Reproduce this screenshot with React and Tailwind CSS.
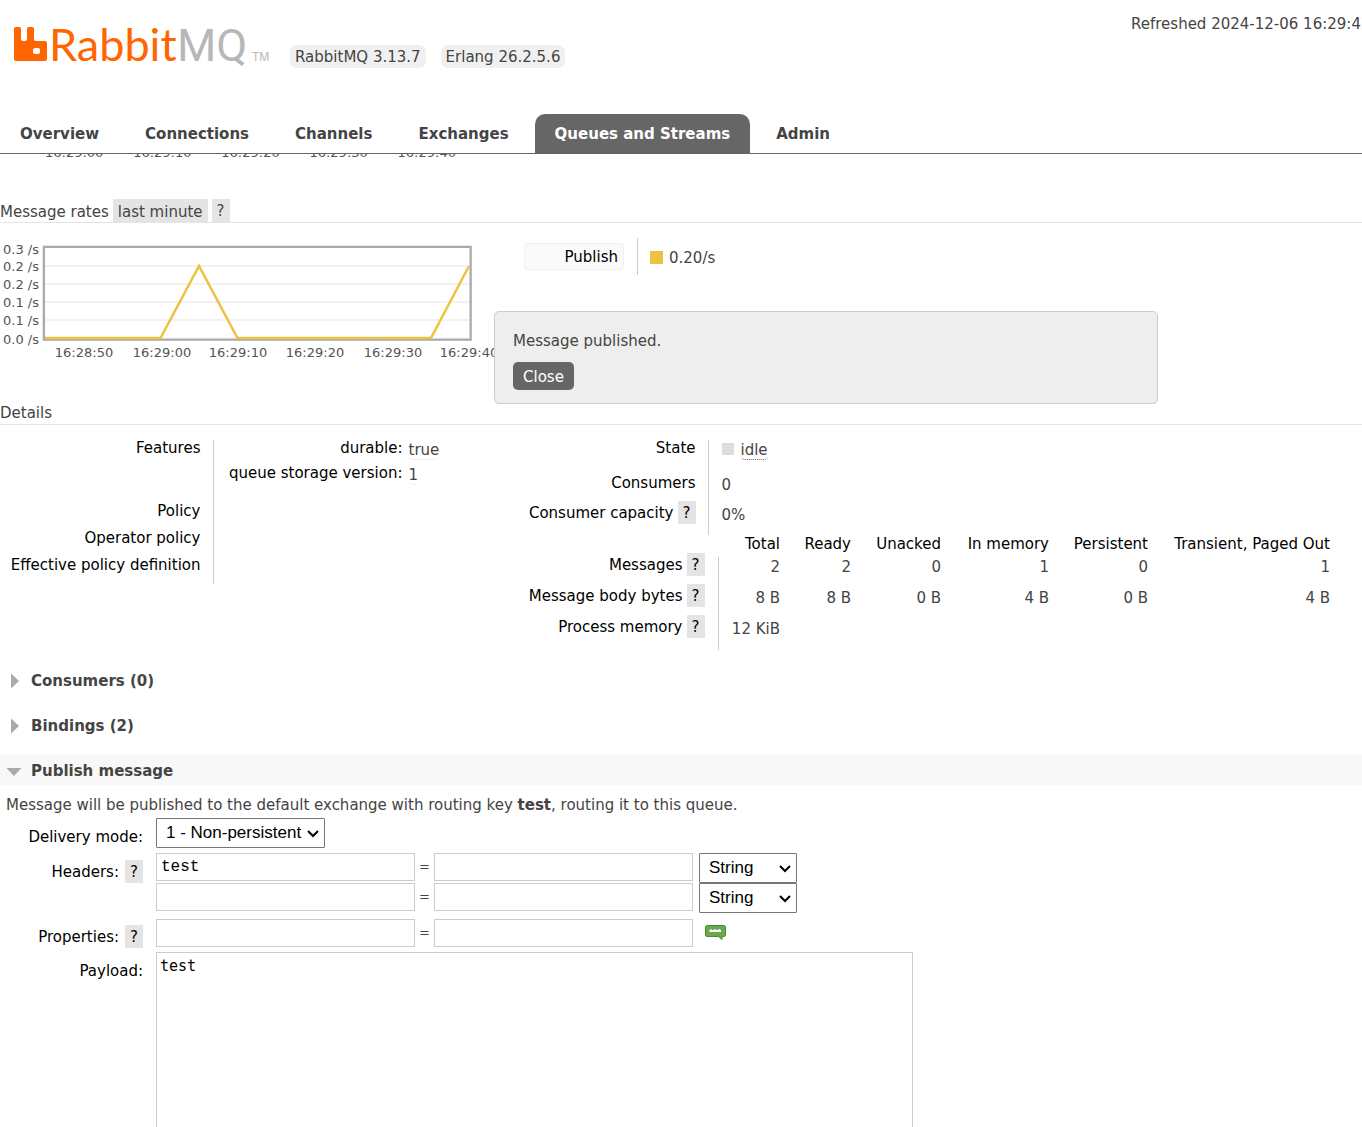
import React from "react";

const HelpButton = () => (
  <button type="button" aria-label="Help" className="h-[23px] w-[18px] bg-[#e4e4e4] text-center leading-[25px]">
    ?
  </button>
);

const Logo = () => (
  <a href="#/" className="block w-[260px]">
    <svg width="260" height="60" viewBox="0 0 260 60" role="img" aria-label="RabbitMQ">
      <path
        fill="#ff6600"
        fillRule="evenodd"
        d="M2 6h3a2 2 0 0 1 2 2v10a2 2 0 0 0 2 2h2a2 2 0 0 0 2-2V8a2 2 0 0 1 2-2h3a2 2 0 0 1 2 2v10a2 2 0 0 0 2 2h9a2 2 0 0 1 2 2v16a2 2 0 0 1-2 2H2a2 2 0 0 1-2-2V8a2 2 0 0 1 2-2zM21 27a2 2 0 0 0-2 2v2a2 2 0 0 0 2 2h3a2 2 0 0 0 2-2v-2a2 2 0 0 0-2-2z"
      />
      <text x="35" y="40" fontFamily="Lato, sans-serif" fontSize="45" fill="#ff6600">
        Rabbit
      </text>
      <text x="163" y="40" fontFamily="Roboto, sans-serif" fontSize="45" fill="#b7b7b7">
        MQ
      </text>
      <text x="238" y="40" fontFamily="Liberation Sans, sans-serif" fontSize="12" fill="#b7b7b7">
        TM
      </text>
    </svg>
  </a>
);

const TABS = ["Overview", "Connections", "Channels", "Exchanges", "Queues and Streams", "Admin"];

const Tab = ({ label }) => {
  const active = label === "Queues and Streams";
  return (
    <a
      href="#/"
      className={
        active
          ? "h-10 rounded-t-[10px] bg-[#666] px-5 leading-[41px] text-white"
          : "h-10 px-5 leading-[41px]"
      }
    >
      {label}
    </a>
  );
};

const Y_LABELS = [
  ["0.3 /s", 14],
  ["0.2 /s", 31],
  ["0.2 /s", 49],
  ["0.1 /s", 67],
  ["0.1 /s", 85],
  ["0.0 /s", 104],
];
const X_LABELS = [
  ["16:28:50", 84],
  ["16:29:00", 162],
  ["16:29:10", 238],
  ["16:29:20", 315],
  ["16:29:30", 393],
  ["16:29:40", 469],
];

const RatesChart = () => (
  <svg width="524" height="125" viewBox="0 0 524 125" className="shrink-0" role="img" aria-label="Message rates">
    <path d="M45 26H470M45 44H470M45 62H470M45 80H470" stroke="#eeeeee" strokeWidth="1.500" />
    <rect x="43" y="6" width="428.500" height="94.500" fill="none" stroke="#cfcfcf" strokeWidth="1" />
    <rect x="44" y="7" width="426.500" height="92.500" fill="none" stroke="#a9a9a9" strokeWidth="2" />
    <path d="M45 98H160.500L199 26L237.500 98H431L469 26" fill="none" stroke="#edc240" strokeWidth="2.500" />
    <g fontFamily="DejaVu Sans, sans-serif" fontSize="13" fill="#545454">
      {Y_LABELS.map(([label, y]) => (
        <text key={y} x="39" y={y} textAnchor="end">
          {label}
        </text>
      ))}
      {X_LABELS.map(([label, x]) => (
        <text key={x} x={x} y="117" textAnchor="middle">
          {label}
        </text>
      ))}
    </g>
  </svg>
);

const Abbr = ({ strong, children }) => (
  <span className={strong ? "rounded border-b border-dotted border-[#666]" : "rounded border-b border-dotted border-[#ddd]"}>
    {children}
  </span>
);

const FeaturesTable = () => (
  <table className="w-[480px] border-collapse">
    <tbody className="align-top">
      <tr className="h-[63px]">
        <th scope="row" className="w-[213px] pr-3 text-right font-normal leading-4 text-black">Features</th>
        <td className="border-l border-[#ccc] pl-[15px]">
          <table>
            <tbody className="align-top">
              <tr className="h-[25px]">
                <th scope="row" className="w-[174px] text-right font-normal leading-4 text-black">durable:</th>
                <td className="pl-[6px] leading-5"><Abbr>true</Abbr></td>
              </tr>
              <tr className="h-[25px]">
                <th scope="row" className="text-right font-normal leading-4 text-black">queue storage version:</th>
                <td className="pl-[6px] leading-5"><Abbr>1</Abbr></td>
              </tr>
            </tbody>
          </table>
        </td>
      </tr>
      {["Policy", "Operator policy", "Effective policy definition"].map((name) => (
        <tr key={name} className="h-[27px]">
          <th scope="row" className="pr-3 text-right font-normal leading-4 text-black">{name}</th>
          <td className="border-l border-[#ccc]" />
        </tr>
      ))}
    </tbody>
  </table>
);

const StateTable = () => (
  <table className="border-collapse">
    <tbody className="align-top">
      <tr className="h-[35px]">
        <th scope="row" className="w-[183px] pr-3 text-right font-normal leading-4 text-black">State</th>
        <td className="border-l border-[#ccc] pl-[13px] leading-5">
          <span className="mr-[7px] inline-block h-3 w-3 bg-[#ddd]" />
          <Abbr strong>idle</Abbr>
        </td>
      </tr>
      <tr className="h-[26px]">
        <th scope="row" className="pr-3 text-right font-normal leading-4 text-black">Consumers</th>
        <td className="border-l border-[#ccc] pl-[13px] leading-5">0</td>
      </tr>
      <tr className="h-[34px]">
        <th scope="row" className="pr-3 text-right font-normal text-black">
          <span className="flex items-center justify-end gap-1 whitespace-nowrap">Consumer capacity <HelpButton /></span>
        </th>
        <td className="border-l border-[#ccc] pl-[13px] pt-1 leading-5">0%</td>
      </tr>
    </tbody>
  </table>
);

const COLUMNS = ["Total", "Ready", "Unacked", "In memory", "Persistent", "Transient, Paged Out"];
const ROWS = [
  ["Messages", ["2", "2", "0", "1", "0", "1"]],
  ["Message body bytes", ["8 B", "8 B", "0 B", "4 B", "0 B", "4 B"]],
  ["Process memory", ["12 KiB", "", "", "", "", ""]],
];

const MessagesTable = () => (
  <table className="w-[811px] table-fixed border-collapse text-right">
    <colgroup>
      <col className="w-[193px]" />
      <col className="w-[68px]" />
      <col className="w-[71px]" />
      <col className="w-[90px]" />
      <col className="w-[108px]" />
      <col className="w-[99px]" />
      <col className="w-[182px]" />
    </colgroup>
    <thead>
      <tr className="h-[22px] align-top text-black">
        <td />
        {COLUMNS.map((c) => (
          <th key={c} scope="col" className="whitespace-nowrap pr-[6px] font-normal leading-[18px]">{c}</th>
        ))}
      </tr>
    </thead>
    <tbody className="align-top">
      {ROWS.map(([name, cells]) => (
        <tr key={name} className="h-[31px]">
          <th scope="row" className="border-r border-[#ccc] pr-[13px] font-normal text-black">
            <span className="-mt-1 flex items-center justify-end gap-1 whitespace-nowrap">{name} <HelpButton /></span>
          </th>
          {cells.map((v, i) => (
            <td key={i} className="pr-[6px] leading-5">{v}</td>
          ))}
        </tr>
      ))}
    </tbody>
  </table>
);

const SectionTitle = ({ open, children }) => (
  <h2 className={open ? "bg-[#f8f8f8]" : ""}>
    <button type="button" className="flex h-[30px] w-full items-center pl-[6px] pt-px text-left font-bold">
      <svg width="16" height="16" viewBox="0 0 16 16" className="mr-[9px]" aria-hidden="true">
        <path d={open ? "M0.500 5H15.500L8 13z" : "M5 0.500V15.500L13 8z"} fill="#aaa" />
      </svg>
      {children}
    </button>
  </h2>
);

const TextBox = ({ label, value }) => (
  <input
    type="text"
    aria-label={label}
    defaultValue={value}
    className="h-7 w-[259px] border border-[#ccc] px-1 font-['Liberation_Mono',monospace] text-base leading-5 text-black"
  />
);

const Pair = ({ label, value, children }) => (
  <div className="flex h-[30px] items-start">
    <TextBox label={label + " name"} value={value} />
    <span className="w-[19px] text-center text-[13px] leading-[27px]">=</span>
    <TextBox label={label + " value"} />
    {children}
  </div>
);

const Select = ({ options, ...rest }) => (
  <span className="relative block h-[30px]">
    <select
      {...rest}
      className="h-full w-full appearance-none rounded-[1px] border border-[#767676] bg-white px-[9px] font-['Liberation_Sans',sans-serif] text-[17px] leading-6 text-black"
    >
      {options.map((o) => <option key={o}>{o}</option>)}
    </select>
    <svg width="12" height="8" viewBox="0 0 12 8" className="pointer-events-none absolute right-[6px] top-3" aria-hidden="true">
      <path d="M1 1L6 6L11 1" fill="none" stroke="#000" strokeWidth="2" />
    </svg>
  </span>
);

const TypeSelect = () => (
  <div className="ml-[6px] w-[98px]">
    <Select aria-label="Header type" options={["String", "Number", "Boolean"]} />
  </div>
);

const SpeechIcon = () => (
  <svg width="21" height="16" viewBox="0 0 21 16" className="ml-3 mt-[6px]" aria-hidden="true">
    <path d="M1.500 0.500H19.500L20.500 1.500V10.500L19.500 11.500H17V14.500L13.500 11.500H1.500L0.500 10.500V1.500z" fill="#6aa84f" stroke="#4b8a2b" />
    <path d="M4.500 7V5L6 4L7.500 5H8.500L10 4L11.500 5H12.500L14 4L16 5V7z" fill="#fff" />
  </svg>
);

const PublishForm = () => (
  <form className="grid grid-cols-[143px_1fr] gap-x-[13px]">
    <label htmlFor="mode" className="pt-[9px] text-right leading-5 text-black">Delivery mode:</label>
    <div className="h-[35px] w-[169px]">
      <Select id="mode" options={["1 - Non-persistent", "2 - Persistent"]} />
    </div>
    <div className="flex items-start justify-end gap-[6px] pt-[7px] leading-6 text-black">
      Headers: <HelpButton />
    </div>
    <div className="h-[66px]">
      <Pair label="Header 1" value="test"><TypeSelect /></Pair>
      <Pair label="Header 2"><TypeSelect /></Pair>
    </div>
    <div className="flex items-start justify-end gap-[6px] pt-[6px] leading-6 text-black">
      Properties: <HelpButton />
    </div>
    <div className="h-[33px]">
      <Pair label="Property"><SpeechIcon /></Pair>
    </div>
    <label htmlFor="payload" className="pt-[9px] text-right leading-5 text-black">Payload:</label>
    <textarea
      id="payload"
      defaultValue="test"
      className="h-[300px] w-[757px] resize-none border border-[#ccc] px-[3px] py-1 font-['DejaVu_Sans_Mono',monospace] text-[15px] leading-[18px] text-black"
    />
  </form>
);

const Notice = () => (
  <div role="dialog" aria-label="Notice" className="absolute left-[494px] top-[88px] h-[93px] w-[664px] rounded-[5px] border border-[#ccc] bg-[#eee] px-[18px] pt-[19px]">
    <p className="leading-5">Message published.</p>
    <button type="button" className="mt-[11px] h-7 rounded-[5px] bg-[#666] px-[10px] leading-[30px] text-white">Close</button>
  </div>
);

export default function App() {
  return (
    <div className="h-screen overflow-hidden bg-white font-['DejaVu_Sans',Verdana,sans-serif] text-[15px] leading-5 text-[#444]">
      <header className="border-b border-[#666]">
        <div className="flex h-[114px] items-start">
          <div className="ml-[14px] mt-[21px]"><Logo /></div>
          <ul className="ml-4 mt-[45px] flex gap-[15px]">
            <li className="h-[23px] rounded-[7px] bg-[#f0f0f0] px-[5px] leading-[25px]">RabbitMQ 3.13.7</li>
            <li className="h-[23px] rounded-[7px] bg-[#f0f0f0] px-[5px] leading-[25px]">Erlang 26.2.5.6</li>
          </ul>
          <p className="ml-auto mt-[14px] w-[231px] whitespace-nowrap">Refreshed 2024-12-06 16:29:42</p>
        </div>
        <nav className="-mb-px flex gap-[6px] font-bold">
          {TABS.map((t) => <Tab key={t} label={t} />)}
        </nav>
      </header>

      <div className="ml-[45px] flex h-[45px] w-[411px] items-start justify-between">
        {X_LABELS.slice(1).map(([label]) => (
          <span key={label} className="flex h-[3px] items-end overflow-hidden text-[13px] leading-[9px] text-[#545454]">{label}</span>
        ))}
      </div>

      <h3 className="flex h-6 items-start gap-1 border-b border-[#e4e4e4] leading-[26px]">
        Message rates
        <button type="button" className="h-[23px] bg-[#e4e4e4] px-[5px] leading-[26px]">last minute</button>
        <HelpButton />
      </h3>
      <section className="relative flex h-[181px] items-start">
        <div className="pt-[17px]"><RatesChart /></div>
        <div className="flex items-start pt-[15px]">
          <button type="button" className="mt-[5px] h-[27px] w-[100px] rounded-[3px] border border-[#f0f0f0] bg-[#fafafa] pr-[5px] text-right leading-[27px] text-black">
            Publish
          </button>
          <div className="ml-[13px] flex h-[37px] items-center border-l border-[#ccc] pl-3 pt-[2px]">
            <span className="mr-[6px] h-[13px] w-[13px] bg-[#edc240]" />
            0.20/s
          </div>
        </div>
        <Notice />
      </section>

      <h3 className="-mt-px h-[22px] border-b border-[#e4e4e4] leading-5">Details</h3>
      <section className="flex h-60 items-start pt-[15px]">
        <FeaturesTable />
        <div className="ml-[45px]">
          <StateTable />
          <MessagesTable />
        </div>
      </section>

      <div className="flex flex-col gap-[15px]">
        <SectionTitle>Consumers (0)</SectionTitle>
        <SectionTitle>Bindings (2)</SectionTitle>
        <SectionTitle open>Publish message</SectionTitle>
      </div>
      <p className="mb-[3px] mt-[10px] pl-[6px]">
        Message will be published to the default exchange with routing key <b>test</b>, routing it to this queue.
      </p>
      <PublishForm />
    </div>
  );
}
